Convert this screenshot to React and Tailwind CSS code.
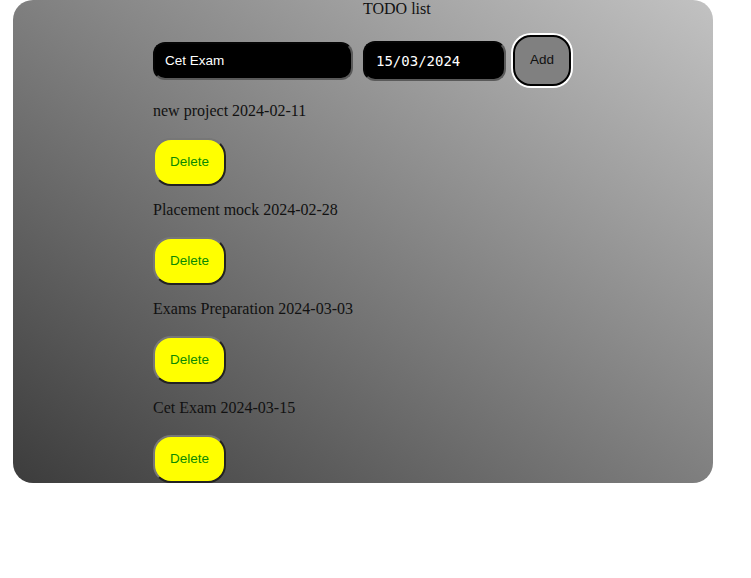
import React from "react";

const items = [
  "new project 2024-02-11",
  "Placement mock 2024-02-28",
  "Exams Preparation 2024-03-03",
  "Cet Exam 2024-03-15",
];

export default function App() {
  return (
    <div className="w-[751px] h-[578px] bg-white">
      <div className="ml-[13px] w-[700px] h-[483px] rounded-[20px] overflow-hidden bg-[linear-gradient(to_top_right,#3c3c3c,#c2c2c2)] font-['Liberation_Serif',serif] text-[16px] text-[#111]">
        <div className="pl-[350px] leading-[18px] h-[18px]">TODO list</div>
        <div className="mt-[17px] pl-[140px] flex items-center h-[51px]">
          <input
            readOnly
            value="Cet Exam"
            className="w-[200px] h-[38px] bg-black text-white rounded-[12px] border-2 [border-style:inset] border-[#5a5a5a] px-[10px] font-['Liberation_Sans',sans-serif] text-[13.5px] outline-none"
          />
          <input
            readOnly
            value="15/03/2024"
            className="ml-[10px] w-[143px] h-[40px] bg-black text-white rounded-[12px] border-2 [border-style:inset] border-[#5a5a5a] px-[11px] font-['DejaVu_Sans_Mono',monospace] text-[14px] outline-none"
          />
          <button className="ml-[7px] w-[58px] h-[51px] bg-[#808080] border-2 border-black ring-2 ring-white rounded-[18px] font-['Liberation_Sans',sans-serif] text-[13.5px] text-[#111]">
            Add
          </button>
        </div>
        <div className="pl-[140px] mt-[16px]">
          {items.map((t, i) => (
            <div key={i} className={i === 0 ? "" : "mt-[15px]"}>
              <div className="leading-[18px] h-[18px]">{t}</div>
              <button className="mt-[18px] w-[73px] h-[48px] bg-[#ffff00] text-[#0a8a00] rounded-[18px] border-2 [border-style:outset] border-[#777] font-['Liberation_Sans',sans-serif] text-[13.5px] block">
                Delete
              </button>
            </div>
          ))}
        </div>
      </div>
    </div>
  );
}
